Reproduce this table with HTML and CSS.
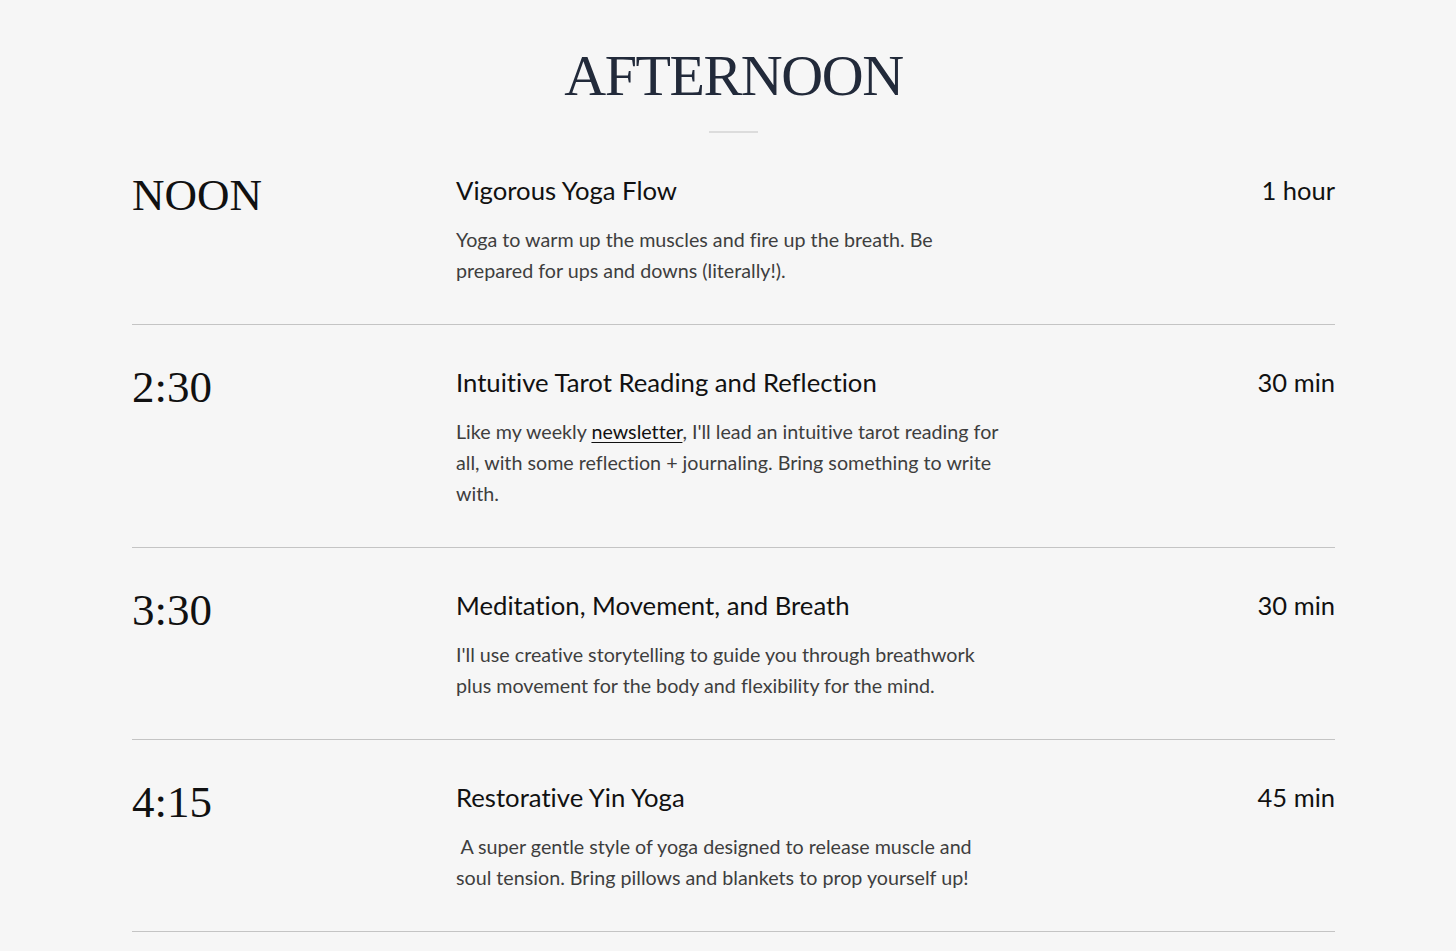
FILE: index.html
```html
<!DOCTYPE html>
<html lang="en">
<head>
<meta charset="utf-8">
<title>Afternoon</title>
<link rel="stylesheet" href="styles.css">
</head>
<body>
<section class="schedule">
  <h2 class="schedule-title">AFTERNOON</h2>
  <div class="title-rule"></div>
  <div class="rows">
    <div class="row">
      <div class="time">NOON</div>
      <div class="info">
        <h3 class="event-name">Vigorous Yoga Flow</h3>
        <p class="event-desc">Yoga to warm up the muscles and fire up the breath. Be<br>prepared for ups and downs (literally!).</p>
      </div>
      <div class="duration">1 hour</div>
    </div>
    <div class="row">
      <div class="time">2:30</div>
      <div class="info">
        <h3 class="event-name">Intuitive Tarot Reading and Reflection</h3>
        <p class="event-desc">Like my weekly <a href="#" class="desc-link">newsletter</a>, I'll lead an intuitive tarot reading for<br>all, with some reflection + journaling. Bring something to write<br>with.</p>
      </div>
      <div class="duration">30 min</div>
    </div>
    <div class="row">
      <div class="time">3:30</div>
      <div class="info">
        <h3 class="event-name">Meditation, Movement, and Breath</h3>
        <p class="event-desc">I'll use creative storytelling to guide you through breathwork<br>plus movement for the body and flexibility for the mind.</p>
      </div>
      <div class="duration">30 min</div>
    </div>
    <div class="row">
      <div class="time">4:15</div>
      <div class="info">
        <h3 class="event-name">Restorative Yin Yoga</h3>
        <p class="event-desc">&nbsp;A super gentle style of yoga designed to release muscle and<br>soul tension. Bring pillows and blankets to prop yourself up!</p>
      </div>
      <div class="duration">45 min</div>
    </div>
  </div>
</section>
</body>
</html>
```

FILE: styles.css
```css
html, body {
  margin: 0;
  padding: 0;
}

body {
  background: #f6f6f6;
  font-family: "Lato", "Liberation Sans", sans-serif;
  font-variant-ligatures: none;
  color: #111;
  min-height: 951px;
}

.schedule {
  padding: 41px 121px 0 132px;
}

.schedule-title {
  margin: 0;
  text-align: center;
  font-family: "Liberation Serif", "Times New Roman", serif;
  font-weight: normal;
  font-size: 58px;
  line-height: 70px;
  color: #222a3a;
  letter-spacing: -1.4px;
}

.title-rule {
  width: 49px;
  height: 2px;
  background: #dcdcdc;
  margin: 20px auto 0;
}

.row {
  display: grid;
  grid-template-columns: 324px 1fr auto;
  align-items: start;
  padding: 39px 0 38px;
  border-bottom: 1px solid #c4c4c4;
}

.time {
  font-family: "Liberation Serif", "Times New Roman", serif;
  font-size: 45px;
  line-height: 45px;
  margin-top: 1px;
  color: #111;
}

.event-name {
  margin: 0;
  font-weight: normal;
  font-size: 25.7px;
  line-height: 36px;
  color: #111;
}

.event-desc {
  margin: 16px 0 0;
  font-size: 19.7px;
  line-height: 31px;
  color: #3e3e3e;
  white-space: nowrap;
}

.desc-link {
  color: #111;
  text-decoration: underline;
  text-underline-offset: 3px;
  text-decoration-thickness: 1px;
}

.duration {
  font-size: 25.5px;
  line-height: 36px;
  color: #111;
  text-align: right;
}
```
